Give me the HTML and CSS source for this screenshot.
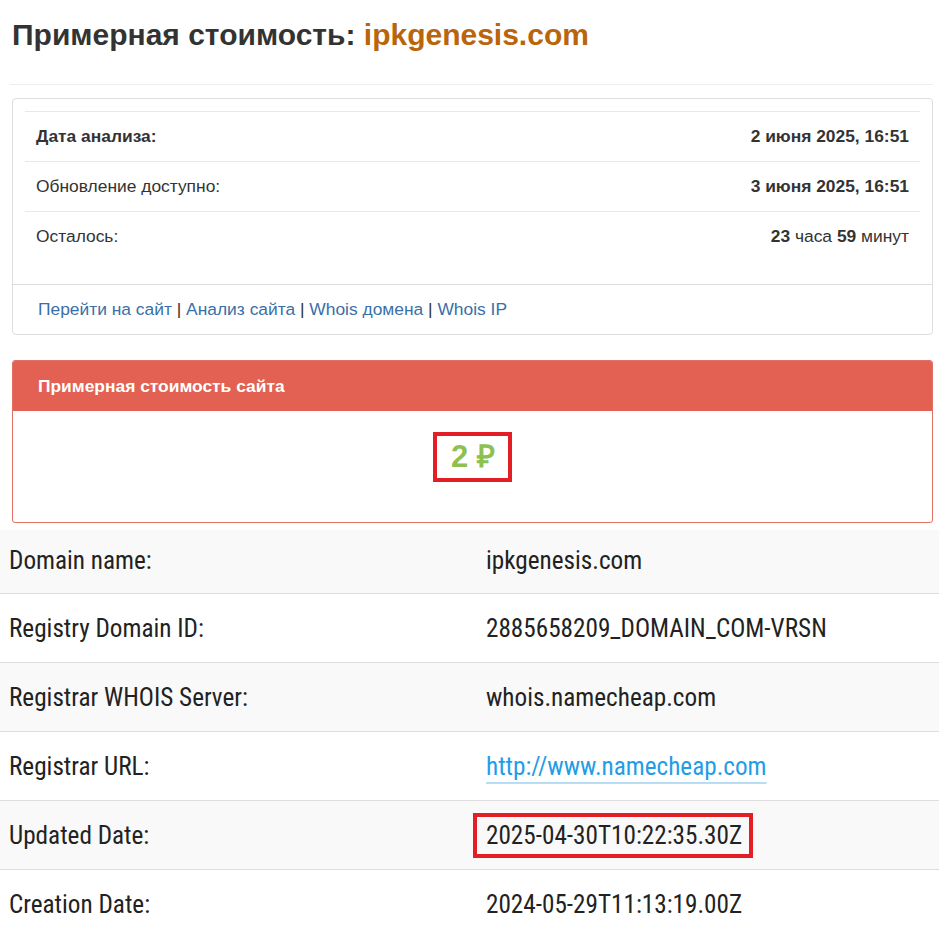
FILE: index.html
```html
<!DOCTYPE html>
<html lang="ru">
<head>
<meta charset="utf-8">
<title>Примерная стоимость: ipkgenesis.com</title>
<link rel="stylesheet" href="styles.css">
</head>
<body>
<div class="top">
  <h1 class="title">Примерная стоимость: <span class="domain">ipkgenesis.com</span></h1>
  <hr class="rule">
  <div class="panel">
    <div class="panel-body">
      <div class="info">
        <div class="info-row"><span class="lbl strong">Дата анализа:</span><span class="val strong">2 июня 2025, 16:51</span></div>
        <div class="info-row"><span class="lbl">Обновление доступно:</span><span class="val strong">3 июня 2025, 16:51</span></div>
        <div class="info-row"><span class="lbl">Осталось:</span><span class="val"><b>23</b> часа <b>59</b> минут</span></div>
      </div>
    </div>
    <div class="panel-footer">
      <a href="#">Перейти на сайт</a> | <a href="#">Анализ сайта</a> | <a href="#">Whois домена</a> | <a href="#">Whois IP</a>
    </div>
  </div>
  <div class="panel panel-red">
    <div class="panel-heading">Примерная стоимость сайта</div>
    <div class="price-body">
      <span class="price">2 ₽</span>
    </div>
  </div>
</div>
<div class="whois">
  <div class="w-row odd first"><div class="w-key">Domain name:</div><div class="w-val">ipkgenesis.com</div></div>
  <div class="w-row"><div class="w-key">Registry Domain ID:</div><div class="w-val">2885658209_DOMAIN_COM-VRSN</div></div>
  <div class="w-row odd"><div class="w-key">Registrar WHOIS Server:</div><div class="w-val">whois.namecheap.com</div></div>
  <div class="w-row"><div class="w-key">Registrar URL:</div><div class="w-val"><a class="w-link" href="#">http://www.namecheap.com</a></div></div>
  <div class="w-row odd"><div class="w-key">Updated Date:</div><div class="w-val"><span class="marked">2025-04-30T10:22:35.30Z</span></div></div>
  <div class="w-row"><div class="w-key">Creation Date:</div><div class="w-val">2024-05-29T11:13:19.00Z</div></div>
</div>
</body>
</html>
```
FILE: styles.css
```css
html, body {
  margin: 0;
  padding: 0;
  background: #fff;
}
body {
  font-family: "Liberation Sans", Arial, sans-serif;
  color: #333;
  font-size: 17.4px;
}
.top {
  padding: 0 6px 0 12px;
}
.title {
  margin: 19px 0 0;
  font-size: 30px;
  line-height: 32px;
  font-weight: bold;
  color: #333;
}
.domain {
  color: #b9650c;
}
.rule {
  margin: 33px 0 0 -2px;
  border: 0;
  border-top: 1px solid #eee;
  height: 0;
}
.panel {
  margin-top: 13px;
  border: 1px solid #ddd;
  border-radius: 4px;
  background: #fff;
}
.panel-body {
  padding: 12px 12px 23px;
}
.info {
  border-top: 1px solid #e8e8e8;
}
.info-row {
  display: flex;
  justify-content: space-between;
  padding: 14px 11px;
  line-height: 21px;
  border-top: 1px solid #e8e8e8;
}
.info-row:first-child {
  border-top: 0;
}
.strong, .val b {
  font-weight: bold;
}
.panel-footer {
  border-top: 1px solid #ddd;
  padding: 14px 25px;
  line-height: 21px;
  color: #333;
}
.panel-footer a {
  color: #3a6fa8;
  text-decoration: none;
}
.panel-red {
  margin-top: 25px;
  margin-bottom: 7px;
  border-color: #e07064;
  border-radius: 3px;
  overflow: hidden;
}
.panel-heading {
  background: #e36152;
  color: #fff;
  font-weight: bold;
  padding: 15px 25px;
  line-height: 20px;
}
.price-body {
  text-align: center;
  padding: 21px 0 40px;
}
.price {
  display: inline-block;
  border: 4px solid #e31e24;
  padding: 0 13px 0 14px;
  line-height: 42px;
  font-size: 31px;
  font-weight: bold;
  color: #8cc152;
}
.whois {
  font-family: "Roboto Condensed", "Liberation Sans Narrow", "DejaVu Sans Condensed", Roboto, sans-serif;
  font-size: 25.2px;
  color: #222;
}
.w-row {
  display: flex;
  align-items: center;
  height: 68px;
  border-bottom: 1px solid #ddd;
}
.w-row.first {
  height: 63px;
}
.w-row.odd {
  background: #f9f9f9;
}
.w-key {
  width: 476px;
  padding-top: 1px;
  box-sizing: border-box;
  padding-left: 9px;
  flex: none;
}
.w-val {
  padding-left: 10px;
  padding-top: 1px;
  line-height: 30px;
}
.w-row.first .w-key,
.w-row.first .w-val {
  padding-top: 0;
  padding-bottom: 2px;
}
.w-link {
  color: #1f9de6;
  text-decoration: underline 2px #b8def5;
  text-underline-offset: 7px;
}
.marked {
  position: relative;
}
.marked::after {
  content: "";
  position: absolute;
  top: -8px;
  bottom: -8px;
  left: -13px;
  right: -11px;
  border: 4px solid #e31e24;
}
```
